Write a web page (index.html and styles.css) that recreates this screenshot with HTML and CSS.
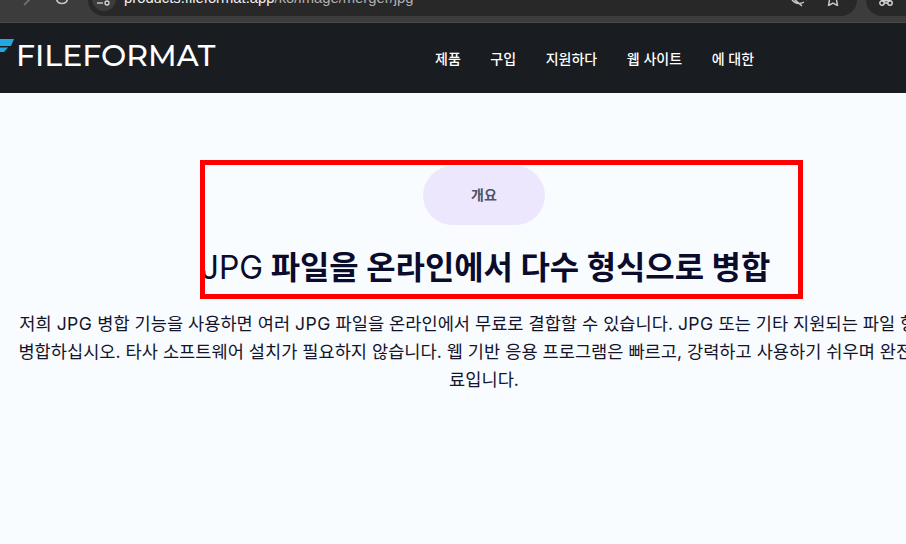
FILE: index.html
```html
<!DOCTYPE html>
<html lang="ko">
  <head>
    <meta charset="UTF-8" />
    <title>JPG 병합</title>
    <link rel="stylesheet" href="styles.css">
  </head>
  <body>
    <div class="toolbar">
      <svg class="tool_icon forward" width="8" height="6" viewBox="0 0 8 6"><path d="M7 -1 L1 5" /></svg>
      <svg class="tool_icon reload" width="14" height="6" viewBox="0 0 14 6"><path d="M1.5 -1 A5.6 5.6 0 0 0 12.5 -1" /></svg>
      <div class="address">
        <span class="site_btn">
          <svg width="16" height="10" viewBox="0 0 16 10"><path d="M1 7 H7" /><circle cx="11" cy="7" r="2" /><path d="M9 2.5 H14" /></svg>
        </span>
        <span class="url">products.fileformat.app<em>/ko/image/merger/jpg</em></span>
        <svg class="addr_icon eye" width="18" height="7" viewBox="0 0 18 7"><path d="M1 0 Q7 6 13 2 M3 -1 L11 6 M15 -1 L16 0" /></svg>
        <svg class="addr_icon star" width="12" height="6" viewBox="0 0 12 6"><path d="M2.5 0 L1.5 5.5 L6 3.2 L10.5 5.5 L9.5 0" /></svg>
      </div>
      <div class="ext_btn">
        <svg width="14" height="6" viewBox="0 0 14 6"><circle cx="3" cy="3" r="2.2" /><circle cx="11" cy="3" r="2.2" /><path d="M3 0.7 H11 M5 3 H9" /></svg>
      </div>
    </div>

    <header class="site_header">
      <a class="logo" href="#">
        <svg class="logo_mark" width="14" height="13" viewBox="0 0 14 13"><path d="M1 0 H14 L11 7 H0 V0 Z M0 8.5 H8 L4 13 H0 Z" /></svg>
        <span class="logo_text">FILEFORMAT</span>
      </a>
      <nav class="site_nav">
        <a href="#">제품</a>
        <a href="#">구입</a>
        <a href="#">지원하다</a>
        <a href="#">웹 사이트</a>
        <a href="#">에 대한</a>
      </nav>
    </header>

    <main class="intro">
      <span class="badge">개요</span>
      <h1><span class="latin">JPG</span> 파일을 온라인에서 다수 형식으로 병합</h1>
      <p>저희 <span class="latin">JPG</span> 병합 기능을 사용하면 여러 <span class="latin">JPG</span> 파일을 온라인에서 무료로 결합할 수 있습니다. <span class="latin">JPG</span> 또는 기타 지원되는 파일 형식을<br>병합하십시오. 타사 소프트웨어 설치가 필요하지 않습니다. 웹 기반 응용 프로그램은 빠르고, 강력하고 사용하기 쉬우며 완전히 무<br>료입니다.</p>
    </main>

    <div class="mark_box"></div>
  </body>
</html>
```

FILE: styles.css
```css
* {
  margin: 0;
  padding: 0;
  box-sizing: border-box;
}
html,
body {
  height: 100%;
  overflow: hidden;
}
body {
  position: relative;
  background: #f9fcff;
  font-family: "Inter", "Noto Sans CJK KR", sans-serif;
}
a {
  text-decoration: none;
  color: inherit;
}

/* browser bar */
.toolbar {
  height: 23px;
  background: #3c3c3c;
  border-bottom: 1px solid #4a4a4a;
  display: flex;
  align-items: flex-start;
  overflow: hidden;
}
.tool_icon {
  fill: none;
  stroke-width: 1.6;
  flex: none;
}
.forward {
  margin-left: 23px;
  stroke: #777;
}
.reload {
  margin-left: 24px;
  stroke: #c7c7c7;
}
.address {
  margin-left: 19px;
  width: 769px;
  height: 16px;
  flex: none;
  background: #282828;
  border-radius: 0 0 16px 16px;
  display: flex;
  align-items: flex-start;
  padding-left: 4px;
}
.site_btn {
  width: 24px;
  height: 24px;
  margin-top: -13px;
  flex: none;
  border-radius: 50%;
  background: #3c3c3c;
  display: flex;
  align-items: flex-end;
  justify-content: center;
  padding-bottom: 5px;
}
.site_btn svg {
  fill: none;
  stroke: #d6d6d6;
  stroke-width: 1.3;
}
.url {
  margin-left: 8px;
  margin-top: -10px;
  font-family: "Liberation Sans", sans-serif;
  font-size: 14.8px;
  line-height: 17px;
  color: #f0f0f0;
  white-space: nowrap;
}
.url em {
  font-style: normal;
  color: #b0b0b0;
}
.addr_icon {
  fill: none;
  stroke: #c7c7c7;
  stroke-width: 1.5;
  flex: none;
}
.eye {
  margin-left: auto;
  margin-right: 18px;
}
.star {
  margin-right: 18px;
}
.ext_btn {
  margin-left: 9px;
  width: 60px;
  height: 16px;
  flex: none;
  background: #282828;
  border-radius: 0 0 0 16px;
  padding-left: 13px;
}
.ext_btn svg {
  fill: none;
  stroke: #d6d6d6;
  stroke-width: 1.4;
  display: block;
}

/* site header */
.site_header {
  width: 968px;
  height: 70px;
  background: #191c20;
  display: flex;
  align-items: center;
}
.logo {
  display: flex;
  align-items: center;
  flex: none;
  width: 435px;
}
.logo_mark {
  flex: none;
  fill: #22a7e0;
  margin-top: -25px;
}
.logo_text {
  margin-left: 2px;
  margin-bottom: 4px;
  font-family: "Montserrat", "Inter", sans-serif;
  font-size: 30px;
  font-weight: 500;
  color: #fff;
  line-height: 32px;
}
.site_nav {
  display: flex;
  gap: 29.6px;
  font-size: 14px;
  font-weight: 500;
  color: #fff;
}

/* intro */
.intro {
  width: 968px;
  display: flex;
  flex-direction: column;
  align-items: center;
  padding-top: 73px;
  text-align: center;
}
.badge {
  width: 122px;
  height: 59px;
  background: #ede7fd;
  border-radius: 30px;
  display: flex;
  align-items: center;
  justify-content: center;
  padding-bottom: 4px;
  font-size: 14px;
  font-weight: 600;
  color: #4b5563;
}
.intro h1 {
  margin-top: 19px;
  padding-left: 3px;
  font-size: 31.9px;
  line-height: 48px;
  font-weight: 700;
  color: #0b0b2b;
  white-space: nowrap;
}
.intro h1 .latin {
  font-weight: 400;
}
.intro p {
  margin-top: 18px;
  font-size: 17.6px;
  line-height: 28px;
  color: #14142b;
  white-space: nowrap;
}
.intro p .latin {
  letter-spacing: 0.4px;
}

/* red annotation */
.mark_box {
  position: absolute;
  left: 200px;
  top: 160px;
  width: 603px;
  height: 139px;
  border: 5px solid #ff0000;
}
```
